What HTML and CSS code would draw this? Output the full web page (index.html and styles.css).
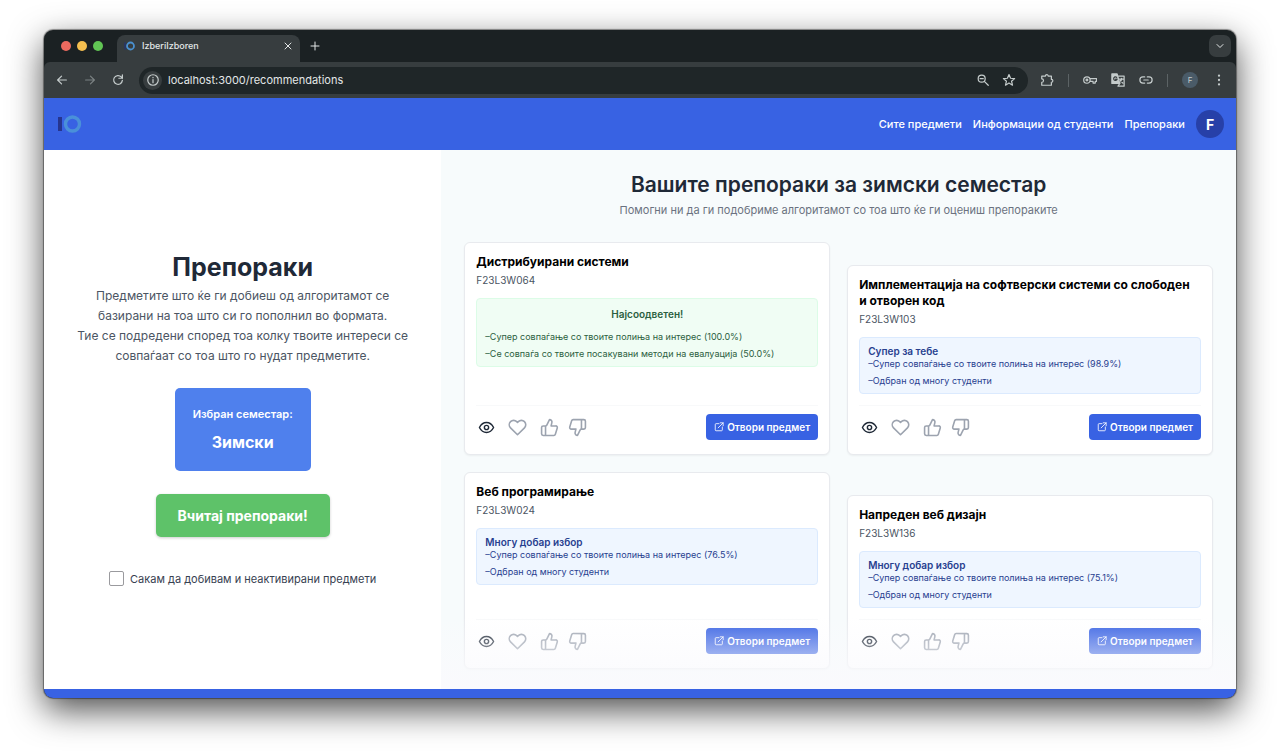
FILE: index.html
```html
<!DOCTYPE html>
<html lang="mk">
  <head>
    <meta charset="UTF-8" />
    <meta name="viewport" content="width=device-width, initial-scale=1" />
    <title>IzberiIzboren</title>
    <link rel="stylesheet" href="styles.css">
  </head>
  <body>
    <!-- shared icons -->
    <svg class="sprite" aria-hidden="true">
      <symbol id="i-eye" viewBox="0 0 24 24"><path d="M2 12s3.6-7 10-7 10 7 10 7-3.6 7-10 7-10-7-10-7Z" /><circle cx="12" cy="12" r="3" /></symbol>
      <symbol id="i-heart" viewBox="0 0 24 24"><path d="M20.8 4.6a5.5 5.5 0 0 0-7.8 0L12 5.7l-1-1.1a5.5 5.5 0 0 0-7.8 7.8L12 21.2l8.8-8.8a5.5 5.5 0 0 0 0-7.8Z" /></symbol>
      <symbol id="i-up" viewBox="0 0 24 24"><path d="M7 10v12M15 5.9 14 10h5.8a2 2 0 0 1 2 2.6l-2.4 8a2 2 0 0 1-1.9 1.4H4a2 2 0 0 1-2-2v-8a2 2 0 0 1 2-2h2.8a2 2 0 0 0 1.8-1.1L12 2a3.1 3.1 0 0 1 3 3.9Z" /></symbol>
      <symbol id="i-down" viewBox="0 0 24 24"><path d="M17 14V2M9 18.1 10 14H4.2a2 2 0 0 1-2-2.6l2.4-8A2 2 0 0 1 6.5 2H20a2 2 0 0 1 2 2v8a2 2 0 0 1-2 2h-2.8a2 2 0 0 0-1.8 1.1L12 22a3.1 3.1 0 0 1-3-3.9Z" /></symbol>
      <symbol id="i-open" viewBox="0 0 24 24"><path d="M12 4H5a2 2 0 0 0-2 2v13a2 2 0 0 0 2 2h13a2 2 0 0 0 2-2v-7M15 2h7v7M22 2 10 14" /></symbol>
    </svg>

    <div class="window">
      <div class="tabs">
        <div class="lights"><i class="red"></i><i class="yellow"></i><i class="green"></i></div>
        <div class="tab">
          <svg class="favicon" viewBox="0 0 12 12"><path d="M1 3v6" stroke="#26356e" stroke-width="1.5" /><circle cx="6.5" cy="6" r="3.5" stroke="#4a90cf" stroke-width="1.8" /></svg>
          <span>IzberiIzboren</span>
          <button class="tab-close" aria-label="Close tab"><svg viewBox="0 0 10 10"><path d="m2 2 6 6M8 2 2 8" /></svg></button>
        </div>
        <button class="tab-new" aria-label="New tab"><svg viewBox="0 0 10 10"><path d="M5 1v8M1 5h8" /></svg></button>
        <button class="tab-list" aria-label="Search tabs"><svg viewBox="0 0 10 10"><path d="m2 3.5 3 3 3-3" /></svg></button>
      </div>

      <div class="toolbar">
        <div class="history">
          <button aria-label="Back"><svg viewBox="0 0 16 16"><path d="M13 8H3M7.5 3.5 3 8l4.5 4.5" /></svg></button>
          <button aria-label="Forward" disabled><svg viewBox="0 0 16 16"><path d="M3 8h10M8.5 3.5 13 8l-4.5 4.5" /></svg></button>
          <button aria-label="Reload"><svg viewBox="0 0 16 16"><path d="M13 8.5a5 5 0 1 1-1.3-4L13 6M13 2v4H9" /></svg></button>
        </div>
        <div class="address">
          <span class="info"><svg viewBox="0 0 16 16"><circle cx="8" cy="8" r="6" /><path d="M8 7.5V11M8 4.9v.4" /></svg></span>
          <input type="text" value="localhost:3000/recommendations" aria-label="Address" />
          <button aria-label="Zoom"><svg viewBox="0 0 16 16"><circle cx="6.5" cy="6.5" r="4" /><path d="m9.500 9.500 4.500 4.500M4.700 6.500h3.600" /></svg></button>
          <button aria-label="Bookmark"><svg viewBox="0 0 16 16"><path d="m8 1.800 1.800 4.200 4.600.4-3.500 3 1.100 4.500L8 11.500l-4 2.400 1.100-4.500-3.500-3L6.200 6Z" /></svg></button>
        </div>
        <div class="extensions">
          <button aria-label="Extensions"><svg viewBox="0 0 16 16"><path d="M2 3.5h4.200a1.600 1.600 0 0 1 3.200 0H13v3.700a1.700 1.700 0 0 1 0 3.400V14H2v-3.300a2 2 0 0 0 0-4Z" /></svg></button>
          <span class="sep"></span>
          <button aria-label="Passwords"><svg viewBox="0 0 16 16"><circle cx="4.5" cy="8" r="3.7" /><circle cx="4.5" cy="8" r="1" /><path d="M8 6.500h7.500v3H14v2h-2.500v-2H8" /></svg></button>
          <button aria-label="Translate"><svg viewBox="0 0 16 16"><path d="M1 1h6l3 11H1Z" fill="#c4cbcb" /><path d="M8.500 3.500H15V15H8l2-3M9.500 7h4.500M12 6v1c0 2-1 3-2.500 4M10.500 8.500l3 3" /><path d="M6.500 5A2 2 0 1 0 7 7H5.300" stroke="#373d3f" /></svg></button>
          <button aria-label="Copy link"><svg viewBox="0 0 16 16"><path d="M6.500 4.500h-2a3.500 3.500 0 0 0 0 7h2M9.500 4.500h2a3.500 3.500 0 0 1 0 7h-2M5.500 8h5" /></svg></button>
          <span class="sep"></span>
          <span class="profile">F</span>
          <button aria-label="Menu"><svg class="dots" viewBox="0 0 16 16"><circle cx="8" cy="3" r="1.3" /><circle cx="8" cy="8" r="1.3" /><circle cx="8" cy="13" r="1.3" /></svg></button>
        </div>
      </div>

      <header class="navbar">
        <a class="logo" href="#" aria-label="IzberiIzboren">
          <svg viewBox="0 0 24 20"><rect x="0" y="3" width="4" height="14" fill="#26358f" stroke="none" /><circle cx="14.5" cy="10" r="7" stroke="#4a90d9" stroke-width="3.4" /></svg>
        </a>
        <nav>
          <a href="#subjects">Сите предмети</a>
          <a href="#students">Информации од студенти</a>
          <a href="#recommendations">Препораки</a>
        </nav>
        <button class="avatar">F</button>
      </header>

      <main>
        <section class="sidebar">
          <h1>Препораки</h1>
          <p>Предметите што ќе ги добиеш од алгоритамот се<br />базирани на тоа што си го пополнил во формата.<br />Тие се подредени според тоа колку твоите интереси се<br />совпаѓаат со тоа што го нудат предметите.</p>
          <div class="semester">
            <span>Избран семестар:</span>
            <strong>Зимски</strong>
          </div>
          <button class="load">Вчитај препораки!</button>
          <label class="inactive"><input type="checkbox" /> Сакам да добивам и неактивирани предмети</label>
        </section>

        <section class="results">
          <h2>Вашите препораки за зимски семестар</h2>
          <p class="lead">Помогни ни да ги подобриме алгоритамот со тоа што ќе ги оцениш препораките</p>

          <div class="grid">
            <article class="card">
              <h3>Дистрибуирани системи</h3>
              <p class="code">F23L3W064</p>
              <div class="match best">
                <h4>Најсоодветен!</h4>
                <ul>
                  <li>Супер совпаѓање со твоите полиња на интерес (100.0%)</li>
                  <li>Се совпаѓа со твоите посакувани методи на евалуација (50.0%)</li>
                </ul>
              </div>
              <footer>
                <button class="eye" aria-label="Преглед"><svg><use href="#i-eye" /></svg></button>
                <button aria-label="Омилен"><svg><use href="#i-heart" /></svg></button>
                <div class="votes">
                  <button aria-label="Добра препорака"><svg><use href="#i-up" /></svg></button>
                  <button aria-label="Лоша препорака"><svg><use href="#i-down" /></svg></button>
                </div>
                <a class="open" href="#F23L3W064"><svg><use href="#i-open" /></svg>Отвори предмет</a>
              </footer>
            </article>

            <article class="card">
              <h3>Имплементација на софтверски системи со слободен и&nbsp;отворен код</h3>
              <p class="code">F23L3W103</p>
              <div class="match">
                <h4>Супер за тебе</h4>
                <ul>
                  <li>Супер совпаѓање со твоите полиња на интерес (98.9%)</li>
                  <li>Одбран од многу студенти</li>
                </ul>
              </div>
              <footer>
                <button class="eye" aria-label="Преглед"><svg><use href="#i-eye" /></svg></button>
                <button aria-label="Омилен"><svg><use href="#i-heart" /></svg></button>
                <div class="votes">
                  <button aria-label="Добра препорака"><svg><use href="#i-up" /></svg></button>
                  <button aria-label="Лоша препорака"><svg><use href="#i-down" /></svg></button>
                </div>
                <a class="open" href="#F23L3W103"><svg><use href="#i-open" /></svg>Отвори предмет</a>
              </footer>
            </article>

            <article class="card">
              <h3>Веб програмирање</h3>
              <p class="code">F23L3W024</p>
              <div class="match">
                <h4>Многу добар избор</h4>
                <ul>
                  <li>Супер совпаѓање со твоите полиња на интерес (76.5%)</li>
                  <li>Одбран од многу студенти</li>
                </ul>
              </div>
              <footer>
                <button class="eye" aria-label="Преглед"><svg><use href="#i-eye" /></svg></button>
                <button aria-label="Омилен"><svg><use href="#i-heart" /></svg></button>
                <div class="votes">
                  <button aria-label="Добра препорака"><svg><use href="#i-up" /></svg></button>
                  <button aria-label="Лоша препорака"><svg><use href="#i-down" /></svg></button>
                </div>
                <a class="open" href="#F23L3W024"><svg><use href="#i-open" /></svg>Отвори предмет</a>
              </footer>
            </article>

            <article class="card">
              <h3>Напреден веб дизајн</h3>
              <p class="code">F23L3W136</p>
              <div class="match">
                <h4>Многу добар избор</h4>
                <ul>
                  <li>Супер совпаѓање со твоите полиња на интерес (75.1%)</li>
                  <li>Одбран од многу студенти</li>
                </ul>
              </div>
              <footer>
                <button class="eye" aria-label="Преглед"><svg><use href="#i-eye" /></svg></button>
                <button aria-label="Омилен"><svg><use href="#i-heart" /></svg></button>
                <div class="votes">
                  <button aria-label="Добра препорака"><svg><use href="#i-up" /></svg></button>
                  <button aria-label="Лоша препорака"><svg><use href="#i-down" /></svg></button>
                </div>
                <a class="open" href="#F23L3W136"><svg><use href="#i-open" /></svg>Отвори предмет</a>
              </footer>
            </article>
          </div>
        </section>
      </main>
      <div class="bottom"></div>
    </div>
  </body>
</html>
```
FILE: styles.css
```css
* {
  box-sizing: border-box;
  margin: 0;
  padding: 0;
}

body {
  display: flex;
  min-height: 100vh;
  padding: 30px 44px 58px;
  font-family: Inter, "Liberation Sans", sans-serif;
  font-size: 11px;
  background-color: #fff;
}

button {
  border: 0;
  font: inherit;
  color: inherit;
  background: none;
}

a {
  color: inherit;
  text-decoration: none;
}

svg {
  display: block;
  fill: none;
  stroke: currentColor;
  stroke-linecap: round;
  stroke-linejoin: round;
}

.sprite {
  position: absolute;
  width: 0;
  height: 0;
}

.window {
  display: flex;
  flex: 1;
  flex-direction: column;
  min-width: 0;
  border-radius: 9px;
  background-color: #1b2123;
  box-shadow: 0 0 1px 1px rgba(0, 0, 0, 0.4), 0 12px 34px rgba(0, 0, 0, 0.7);
  overflow: hidden;
}

/* browser tabs */

.tabs {
  display: flex;
  align-items: center;
  height: 32px;
  padding-right: 5px;
  color: #e3e7e7;
}

.lights {
  display: flex;
  gap: 6px;
  padding: 0 14px 0 17px;
}

.lights i {
  width: 10px;
  height: 10px;
  border-radius: 50%;
}

.red { background-color: #ee6a5f; }
.yellow { background-color: #f5bf4f; }
.green { background-color: #61c554; }

.tab {
  display: flex;
  align-items: center;
  align-self: flex-end;
  gap: 6px;
  width: 183px;
  height: 27px;
  padding: 0 7px;
  padding-bottom: 6px;
  border-radius: 8px 8px 0 0;
  font-size: 9px;
  font-weight: 500;
  background-color: #373d3f;
}

.tab span {
  flex: 1;
}

.favicon {
  width: 12px;
  height: 12px;
}

.tab-close svg,
.tab-new svg,
.tab-list svg {
  width: 10px;
  height: 10px;
}

.tab-new {
  margin-left: 10px;
}

.tab-list {
  display: flex;
  align-items: center;
  justify-content: center;
  width: 22px;
  height: 22px;
  margin-left: auto;
  border-radius: 7px;
  background-color: #373d3f;
}

/* browser toolbar */

.toolbar {
  display: flex;
  align-items: center;
  height: 36px;
  padding-right: 10px;
  border-radius: 6px 6px 0 0;
  color: #c4cbcb;
  background-color: #373d3f;
}

.toolbar svg {
  width: 14px;
  height: 14px;
  stroke-width: 1.4;
}

.history {
  display: flex;
  gap: 14px;
  padding: 0 14px 0 11px;
}

.history button:disabled {
  color: #7b8283;
}

.address {
  display: flex;
  flex: 1;
  align-items: center;
  gap: 12px;
  height: 27px;
  padding: 0 12px 0 4px;
  border-radius: 14px;
  background-color: #1f2628;
}

.info {
  display: flex;
  align-items: center;
  justify-content: center;
  width: 19px;
  height: 19px;
  margin-right: -6px;
  border-radius: 50%;
  background-color: #373d3f;
}

.address input {
  flex: 1;
  min-width: 0;
  border: 0;
  outline: 0;
  font: inherit;
  color: #e3e7e7;
  background: none;
}

.extensions {
  display: flex;
  align-items: center;
  gap: 14px;
  padding-left: 12px;
}

.sep {
  width: 1px;
  height: 13px;
  background-color: #5c6365;
}

.profile {
  width: 16px;
  border-radius: 50%;
  font-size: 8px;
  line-height: 16px;
  text-align: center;
  background-color: #4a5b68;
}

.toolbar .dots {
  fill: currentColor;
  stroke: none;
}

/* page header */

.navbar {
  display: flex;
  align-items: center;
  height: 52px;
  padding: 0 12px 0 14px;
  color: #fff;
  background-color: #3862e3;
}

.logo svg {
  width: 24px;
  height: 20px;
}

.navbar nav {
  display: flex;
  gap: 11px;
  margin: 0 11px 0 auto;
  font-weight: 500;
}

.avatar {
  width: 28px;
  height: 28px;
  border-radius: 50%;
  font-size: 14px;
  font-weight: 700;
  background-color: #2740a8;
}

/* content */

main {
  display: grid;
  flex: 1;
  grid-template-columns: 1fr 2fr;
  background-color: #fff;
}

.sidebar {
  display: flex;
  flex-direction: column;
  align-items: center;
  justify-content: center;
  padding-bottom: 2px;
  text-align: center;
  color: #4b5563;
}

.sidebar h1 {
  font-size: 25px;
  line-height: 32px;
  color: #1f2937;
}

.sidebar p {
  margin: 3px 0 22px;
  font-size: 12px;
  line-height: 20px;
}

.semester {
  display: flex;
  flex-direction: column;
  gap: 8px;
  padding: 18px 18px 17px;
  border-radius: 5px;
  font-size: 11px;
  font-weight: 600;
  line-height: 16px;
  color: #fff;
  background-color: #4f80ed;
}

.semester strong {
  font-size: 16px;
  font-weight: 700;
  line-height: 24px;
}

.load {
  margin: 23px 0 34px;
  padding: 0 22px;
  border-radius: 5px;
  font-size: 14px;
  font-weight: 700;
  line-height: 43px;
  color: #fff;
  background-color: #5ec269;
  box-shadow: 0 1px 3px rgba(0, 0, 0, 0.2);
}

.inactive {
  display: flex;
  align-items: center;
  gap: 6px;
  color: #374151;
}

.inactive input {
  appearance: none;
  width: 15px;
  height: 15px;
  border: 1px solid #9a9a9e;
  border-radius: 2px;
  background-color: #fff;
}

.results {
  position: relative;
  padding: 22px 23px 20px;
  background-color: #f7fbfc;
}

/* fade over the end of the list */
.results::after {
  content: "";
  position: absolute;
  right: 0;
  bottom: 0;
  left: 0;
  height: 72px;
  background-image: linear-gradient(rgba(250, 250, 253, 0), #fafafd);
  pointer-events: none;
}

.results h2 {
  font-size: 21px;
  font-weight: 600;
  line-height: 26px;
  text-align: center;
  color: #1f2937;
}

.lead {
  margin: 4px 0 23px;
  font-size: 11px;
  line-height: 17px;
  text-align: center;
  color: #6b7280;
}

.grid {
  display: grid;
  grid-template-columns: 1fr 1fr;
  gap: 17px;
}

.card {
  display: flex;
  flex-direction: column;
  padding: 11px 11px 14px;
  border: 1px solid #e8eaee;
  border-radius: 6px;
  background-color: #fff;
  box-shadow: 0 1px 2px rgba(0, 0, 0, 0.05);
}

.card:nth-child(even) {
  margin-top: 23px;
}

.card h3 {
  font-size: 12px;
  font-weight: 700;
  line-height: 16px;
  color: #000;
}

.code {
  margin: 3px 0 10px;
  font-size: 10px;
  line-height: 15px;
  color: #4b5563;
}

.match {
  margin-bottom: 11px;
  padding: 6px 8px;
  border: 1px solid #dbeafe;
  border-radius: 4px;
  color: #27408f;
  background-color: #eff6ff;
}

.match h4 {
  font-size: 10px;
  font-weight: 600;
  line-height: 14px;
}

.match ul {
  display: grid;
  gap: 5px;
  font-size: 9px;
  font-weight: 400;
  line-height: 12px;
  list-style: none;
}

.match li::before {
  content: "–";
}

.best {
  border-color: #dcfce7;
  color: #2b6040;
  background-color: #f0fdf4;
}

.best h4 {
  margin: 2px 0 10px;
  text-align: center;
}

.card footer {
  display: flex;
  align-items: center;
  gap: 13px;
  margin-top: auto;
  padding-top: 8px;
  border-top: 1px solid #f8f9fa;
  color: #9ca3af;
}

.card footer button svg {
  width: 19px;
  height: 19px;
  stroke-width: 2;
}

.card footer .eye {
  padding-left: 2px;
  color: #1f2937;
}

.card footer .eye svg {
  width: 17px;
  height: 17px;
}

.votes {
  display: flex;
  gap: 9px;
}

.open {
  display: flex;
  align-items: center;
  gap: 3px;
  margin-left: auto;
  padding: 0 8px;
  border-radius: 4px;
  font-size: 10px;
  font-weight: 600;
  line-height: 26px;
  color: #fff;
  background-color: #3862e3;
}

.open svg {
  width: 10px;
  height: 10px;
  stroke-width: 2;
}

.bottom {
  height: 9px;
  background-color: #3862e3;
}
```
